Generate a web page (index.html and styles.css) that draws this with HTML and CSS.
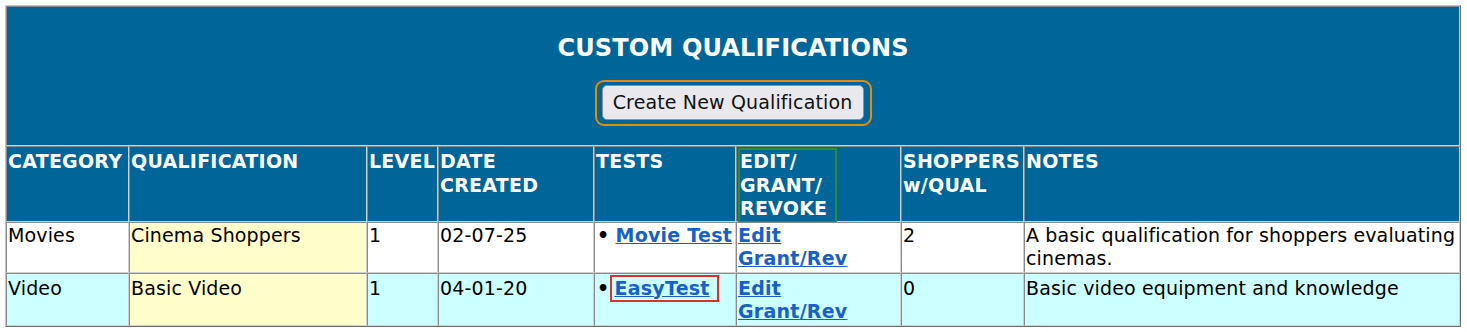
FILE: index.html
```html
<!DOCTYPE html>
<html>
<head>
<meta charset="utf-8">
<title>Custom Qualifications</title>
<link rel="stylesheet" href="styles.css">
</head>
<body>
<table class="quals">
  <colgroup>
    <col class="c-cat"><col class="c-qual"><col class="c-level"><col class="c-date"><col class="c-tests"><col class="c-edit"><col class="c-shop"><col class="c-notes">
  </colgroup>
  <tr>
    <td class="title-cell" colspan="8">
      <div class="title-box">
        <div class="title">CUSTOM QUALIFICATIONS</div>
        <div class="btn-ring"><button class="btn" type="button">Create New Qualification</button></div>
      </div>
    </td>
  </tr>
  <tr class="head">
    <th>CATEGORY</th>
    <th>QUALIFICATION</th>
    <th>LEVEL</th>
    <th>DATE CREATED</th>
    <th>TESTS</th>
    <th><div class="focus-green">EDIT/<br>GRANT/<br>REVOKE</div></th>
    <th>SHOPPERS w/QUAL</th>
    <th>NOTES</th>
  </tr>
  <tr class="row-a">
    <td>Movies</td>
    <td class="qual">Cinema Shoppers</td>
    <td>1</td>
    <td>02-07-25</td>
    <td><span class="bullet">•</span> <a class="lnk" href="#">Movie Test</a></td>
    <td><a class="lnk" href="#">Edit</a><br><a class="lnk" href="#">Grant/Rev</a></td>
    <td>2</td>
    <td>A basic qualification for shoppers evaluating cinemas.</td>
  </tr>
  <tr class="row-b">
    <td>Video</td>
    <td class="qual">Basic Video</td>
    <td>1</td>
    <td>04-01-20</td>
    <td><span class="bullet">•</span> <a class="lnk boxed" href="#">EasyTest</a></td>
    <td><a class="lnk" href="#">Edit</a><br><a class="lnk" href="#">Grant/Rev</a></td>
    <td>0</td>
    <td>Basic video equipment and knowledge</td>
  </tr>
</table>
</body>
</html>
```

FILE: styles.css
```css
body {
  margin: 5px;
  font-family: "DejaVu Sans", Verdana, sans-serif;
  font-size: 19px;
  line-height: 23.5px;
  letter-spacing: 0.14px;
  color: #000;
  background: #fff;
}

.quals {
  width: 1456px;
  table-layout: fixed;
  border-collapse: separate;
  border-spacing: 0;
  border: 1px solid;
  border-color: #c4c4c4 #6e6e6e #6e6e6e #c4c4c4;
}

.c-cat { width: 123px; }
.c-qual { width: 238px; }
.c-level { width: 71px; }
.c-date { width: 156px; }
.c-tests { width: 142px; }
.c-edit { width: 165px; }
.c-shop { width: 123px; }
.c-notes { width: 436px; }

.quals td,
.quals th {
  border: 1px solid;
  border-color: #8a8a8a #cfcfcf #cfcfcf #8a8a8a;
  padding: 1px;
  vertical-align: baseline;
  text-align: left;
}

.title-cell {
  background: #006699;
}

.title-box {
  display: flex;
  flex-direction: column;
  align-items: center;
  gap: 18px;
  padding: 26px 0 18px;
}

.title {
  color: #fff;
  font-size: 24px;
  font-weight: bold;
  line-height: 28px;
  letter-spacing: 0.15px;
}

.btn-ring {
  display: flex;
  border: 2px solid #e58c0a;
  border-radius: 9px;
  padding: 3px 6px 4px 5px;
}

.btn {
  box-sizing: border-box;
  width: 262px;
  height: 35px;
  padding: 0 10px;
  font-family: "DejaVu Sans", Verdana, sans-serif;
  font-size: 19px;
  line-height: 23px;
  letter-spacing: 0.14px;
  color: #111;
  background: #e9e9ed;
  border: 1px solid #8f8f9d;
  border-radius: 5px;
}

.head th {
  background: #006699;
  color: #fff;
  font-weight: bold;
  letter-spacing: 0.25px;
}

.focus-green {
  width: fit-content;
  border: 2px solid #2f8a3c;
  padding-right: 8px;
  margin-bottom: -3px;
}

.row-a td { background: #fff; }
.row-b td { background: #ccffff; }
.quals td.qual { background: #ffffcc; }

.bullet {
  display: inline-block;
  padding-left: 1px;
  font-weight: bold;
}

.lnk {
  color: #1a5fc6;
  font-weight: bold;
  text-decoration: underline;
  letter-spacing: 0.25px;
}

.boxed {
  display: inline-block;
  border: 2px solid #d9322e;
  padding: 0 7px 0 2px;
  margin-left: -5px;
}
```
